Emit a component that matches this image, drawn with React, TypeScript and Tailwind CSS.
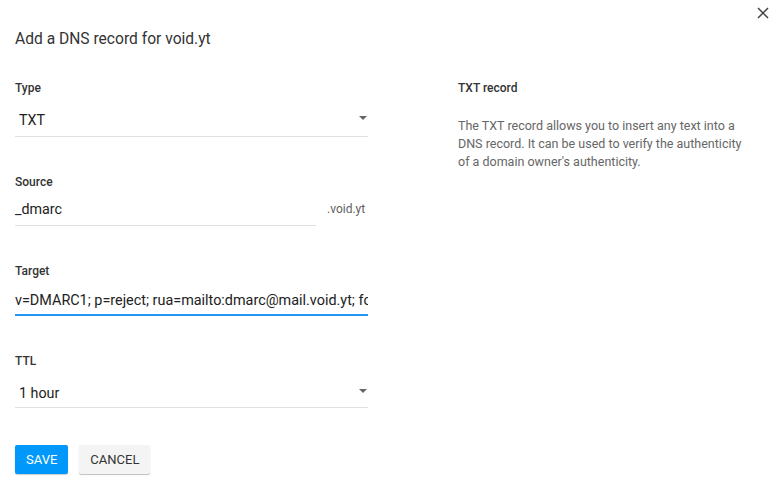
import React from 'react'

function Label({ children }: { children: React.ReactNode }) {
  return <p className="text-[12px] leading-[14px] font-medium text-[#333]">{children}</p>
}

function Caret() {
  return <span className="w-0 h-0 border-x-[4px] border-x-transparent border-t-[4px] border-t-[#666] mr-[1px] mb-[5px]" />
}

function SelectField({ label, value, className, boxClass }: { label: string; value: string; className?: string; boxClass: string }) {
  return (
    <div className={className}>
      <Label>{label}</Label>
      <div className={`${boxClass} border-b border-[#e0e0e0] flex items-center justify-between`}>
        <span className="pl-[4px] text-[14.3px] leading-[20px] text-[#222]">{value}</span>
        <Caret />
      </div>
    </div>
  )
}

export default function App() {
  return (
    <div className="relative w-[775px] h-[496px] bg-white overflow-hidden font-['Roboto',sans-serif] px-[15px] pt-[27px]">
      {/* close */}
      <button type="button" className="absolute left-[757px] top-[7px] w-[12px] h-[12px] text-[#444]">
        <svg width="12" height="12" viewBox="0 0 12 12" fill="none" stroke="currentColor" strokeWidth="1.5">
          <path d="M1 1L11 11M11 1L1 11" />
        </svg>
      </button>

      <h1 className="text-[15.6px] leading-[24px] font-normal text-[#333]">Add a DNS record for void.yt</h1>

      <div className="flex mt-[30px]">
        {/* form */}
        <div className="w-[353px] flex-shrink-0">
          <SelectField label="Type" value="TXT" boxClass="mt-[15px] pb-[6px]" />

          <div className="mt-[38px]">
            <Label>Source</Label>
            <div className="flex items-end">
              <div className="w-[301px] mt-[10px] pb-[6px] border-b border-[#e0e0e0] text-[14.3px] leading-[20px] text-[#222]">_dmarc</div>
              <span className="ml-[11px] pb-[9px] text-[12px] leading-[16px] text-[#616161]">.void.yt</span>
            </div>
          </div>

          <div className="mt-[38px]">
            <Label>Target</Label>
            <div className="mt-[13px] pb-[3px] border-b-2 border-[#2196f3] text-[14.4px] leading-[20px] text-[#222] whitespace-nowrap overflow-hidden">
              v=DMARC1; p=reject; rua=mailto:dmarc@mail.void.yt; fo=1
            </div>
          </div>

          <SelectField label="TTL" value="1 hour" className="mt-[38px]" boxClass="mt-[15px] pb-[4px]" />

          <div className="flex gap-[11px] mt-[37px]">
            <button type="button" className="h-[29px] px-[11px] rounded-[2px] bg-[#0099fb] text-white text-[13px] uppercase shadow-[0_1px_1px_rgba(0,0,0,0.2)]">Save</button>
            <button type="button" className="h-[29px] px-[11px] rounded-[2px] bg-[#f4f4f4] text-[#333] text-[13px] uppercase shadow-[0_1px_1px_rgba(0,0,0,0.25)]">Cancel</button>
          </div>
        </div>

        {/* help */}
        <div className="ml-[90px] w-[290px]">
          <Label>TXT record</Label>
          <p className="mt-[22px] text-[12.5px] leading-[18px] text-[#666]">
            The TXT record allows you to insert any text into a DNS record. It can be used to verify the authenticity of a domain owner's authenticity.
          </p>
        </div>
      </div>
    </div>
  )
}
